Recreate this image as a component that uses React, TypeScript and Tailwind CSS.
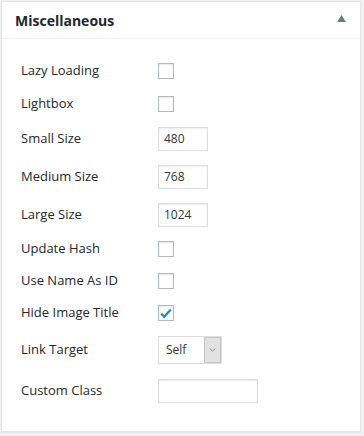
import { ReactNode } from "react"

const font = { fontFamily: '"Open Sans", "Noto Sans", sans-serif' }

function Row({ label, h, children }: { label: string; h: string; children: ReactNode }) {
  return (
    <div className={`flex items-center ${h}`}>
      <div className="w-[137px] shrink-0 text-[13px] text-[#23282d]">{label}</div>
      <div className="flex items-center">{children}</div>
    </div>
  )
}

function Checkbox({ checked = false }: { checked?: boolean }) {
  return (
    <div className="w-4 h-4 border border-[#b4b9be] bg-white shadow-[inset_0_1px_2px_rgba(0,0,0,0.1)] flex items-center justify-center">
      {checked && (
        <svg viewBox="0 0 16 16" className="w-[15px] h-[15px]">
          <path d="M2.5 8.2 L6 11.8 L13.5 3.5" fill="none" stroke="#1e8cbe" strokeWidth="2.6" strokeLinejoin="miter" />
        </svg>
      )}
    </div>
  )
}

function TextInput({ value, w }: { value: string; w: string }) {
  return (
    <div
      className={`${w} h-6 border border-[#ddd] bg-white shadow-[inset_0_1px_2px_rgba(0,0,0,0.07)] px-[5px] flex items-center text-[12px] text-[#32373c]`}
    >
      {value}
    </div>
  )
}

export default function App() {
  return (
    <div className="w-[364px] h-[436px] bg-[#f1f1f1] pt-px pl-px" style={font}>
      <div className="w-[360px] h-[431px] bg-white border border-[#e5e5e5] shadow-[0_1px_1px_rgba(0,0,0,0.04)]">
        <div className="h-[37px] border-b border-[#eee] flex items-center justify-between pl-[13px] pr-[14px]">
          <span className="text-[14px] font-bold text-[#23282d]">Miscellaneous</span>
          <svg viewBox="0 0 10 8" className="w-[9px] h-[7px] mb-[3px]">
            <path d="M0 8 L5 0 L10 8 Z" fill="#72777c" />
          </svg>
        </div>
        <div className="pl-[19px] pt-4">
          <Row label="Lazy Loading" h="h-8"><Checkbox /></Row>
          <Row label="Lightbox" h="h-[33px]"><Checkbox /></Row>
          <Row label="Small Size" h="h-[38px]"><TextInput value="480" w="w-[50px]" /></Row>
          <Row label="Medium Size" h="h-[38px]"><TextInput value="768" w="w-[50px]" /></Row>
          <Row label="Large Size" h="h-[37px]"><TextInput value="1024" w="w-[50px]" /></Row>
          <Row label="Update Hash" h="h-8"><Checkbox /></Row>
          <Row label="Use Name As ID" h="h-8"><Checkbox /></Row>
          <Row label="Hide Image Title" h="h-8"><Checkbox checked /></Row>
          <Row label="Link Target" h="h-[42px]">
            <div className="w-16 h-7 border border-[#ddd] bg-white flex items-stretch text-[12px] text-[#32373c]">
              <div className="flex-1 flex items-center pl-[7px]">Self</div>
              <div className="w-[17px] bg-[#e2e2e2] border border-[#c6c6c6] flex items-center justify-center">
                <svg viewBox="0 0 8 5" className="w-[7px] h-[4px]">
                  <path d="M0.5 0.5 L4 4 L7.5 0.5" fill="none" stroke="#777" strokeWidth="1" />
                </svg>
              </div>
            </div>
          </Row>
          <Row label="Custom Class" h="h-10"><TextInput value="" w="w-[100px]" /></Row>
        </div>
      </div>
    </div>
  )
}
